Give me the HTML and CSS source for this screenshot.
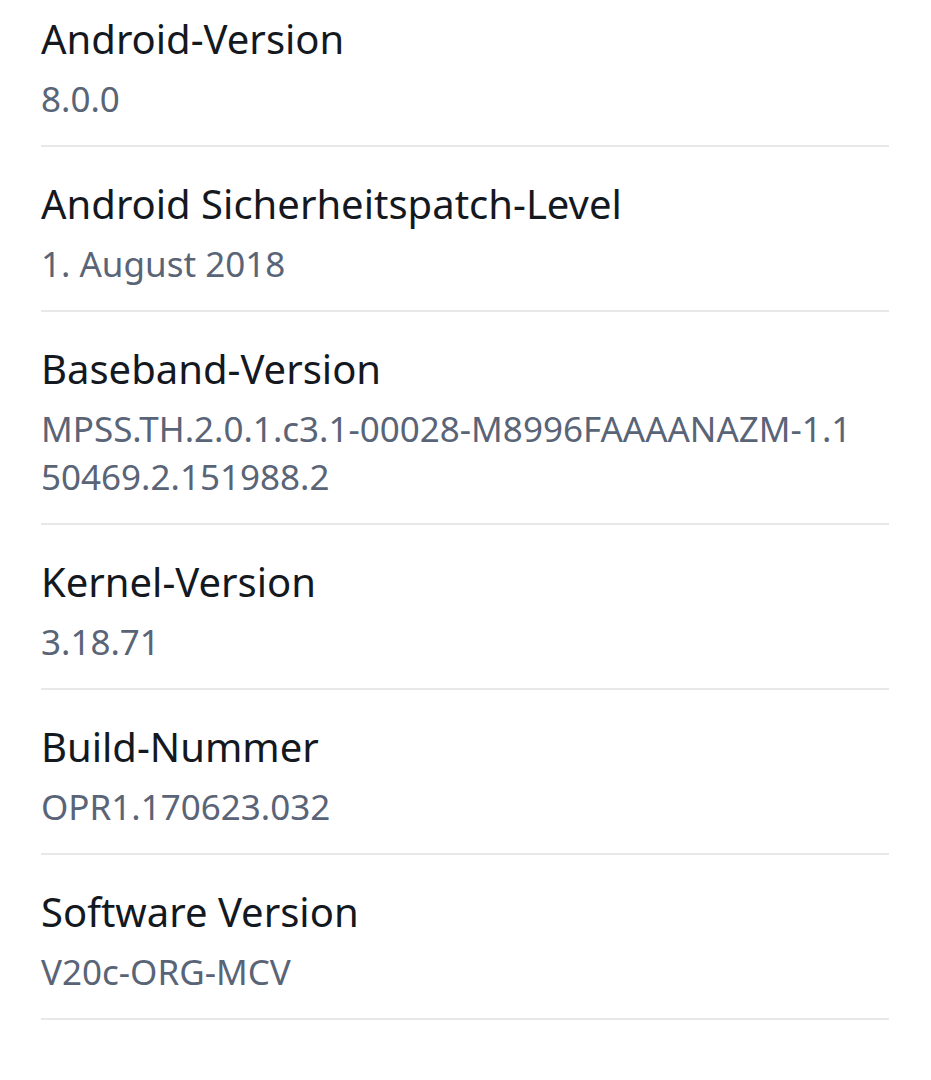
FILE: index.html
```html
<!DOCTYPE html>
<html lang="de">
<head>
<meta charset="utf-8">
<link rel="stylesheet" href="styles.css">
</head>
<body>
<main class="list">
  <section class="item first">
    <div class="title">Android-Version</div>
    <div class="value">8.0.0</div>
  </section>
  <section class="item">
    <div class="title">Android Sicherheitspatch-Level</div>
    <div class="value">1. August 2018</div>
  </section>
  <section class="item">
    <div class="title">Baseband-Version</div>
    <div class="value">MPSS.TH.2.0.1.c3.1-00028-M8996FAAAANAZM-1.1<br>50469.2.151988.2</div>
  </section>
  <section class="item">
    <div class="title">Kernel-Version</div>
    <div class="value">3.18.71</div>
  </section>
  <section class="item">
    <div class="title">Build-Nummer</div>
    <div class="value">OPR1.170623.032</div>
  </section>
  <section class="item">
    <div class="title">Software Version</div>
    <div class="value">V20c-ORG-MCV</div>
  </section>
</main>
</body>
</html>
```
FILE: styles.css
```css
html, body {
  margin: 0;
  padding: 0;
  background: #ffffff;
}
body {
  font-family: "Noto Sans", "Open Sans", sans-serif;
}
.list {
  margin: 0 42px 0 41px;
}
.item {
  padding: 31px 0 22px;
  border-bottom: 2px solid #e8e8ea;
}
.item.first {
  padding-top: 13px;
}
.title {
  font-size: 40px;
  line-height: 52px;
  color: #14181f;
}
.value {
  margin-top: 10px;
  font-size: 35px;
  line-height: 48px;
  color: #5a6477;
  white-space: nowrap;
}
```
